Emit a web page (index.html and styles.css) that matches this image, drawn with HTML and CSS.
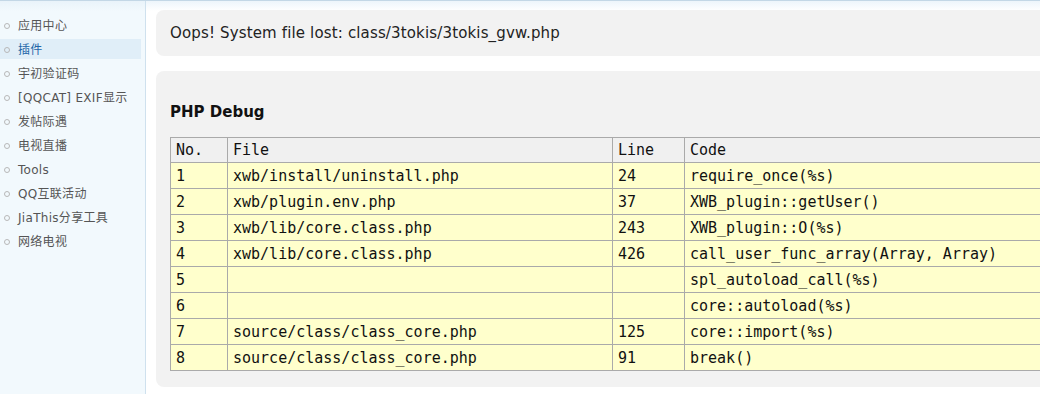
FILE: index.html
```html
<!DOCTYPE html>
<html>
<head>
<meta charset="utf-8">
<link rel="stylesheet" href="styles.css">
</head>
<body>
<div class="page">
  <aside class="sidebar">
    <ul class="menu">
      <li class="item">应用中心</li>
      <li class="item active">插件</li>
      <li class="item">宇初验证码</li>
      <li class="item">[QQCAT] EXIF显示</li>
      <li class="item">发帖际遇</li>
      <li class="item">电视直播</li>
      <li class="item">Tools</li>
      <li class="item">QQ互联活动</li>
      <li class="item">JiaThis分享工具</li>
      <li class="item">网络电视</li>
    </ul>
  </aside>
  <main class="main">
    <div class="box msg">Oops! System file lost: class/3tokis/3tokis_gvw.php</div>
    <div class="box debug">
      <h3 class="title">PHP Debug</h3>
      <div class="clip">
        <table class="trace">
          <colgroup><col class="c1"><col class="c2"><col class="c3"><col class="c4"></colgroup>
          <tr class="head"><td>No.</td><td>File</td><td>Line</td><td>Code</td></tr>
          <tr><td>1</td><td>xwb/install/uninstall.php</td><td>24</td><td>require_once(%s)</td></tr>
          <tr><td>2</td><td>xwb/plugin.env.php</td><td>37</td><td>XWB_plugin::getUser()</td></tr>
          <tr><td>3</td><td>xwb/lib/core.class.php</td><td>243</td><td>XWB_plugin::O(%s)</td></tr>
          <tr><td>4</td><td>xwb/lib/core.class.php</td><td>426</td><td>call_user_func_array(Array, Array)</td></tr>
          <tr><td>5</td><td></td><td></td><td>spl_autoload_call(%s)</td></tr>
          <tr><td>6</td><td></td><td></td><td>core::autoload(%s)</td></tr>
          <tr><td>7</td><td>source/class/class_core.php</td><td>125</td><td>core::import(%s)</td></tr>
          <tr><td>8</td><td>source/class/class_core.php</td><td>91</td><td>break()</td></tr>
        </table>
      </div>
    </div>
  </main>
</div>
</body>
</html>
```
FILE: styles.css
```css
html, body {
  margin: 0;
  padding: 0;
  background: #fff;
  overflow: hidden;
}
body {
  width: 1040px;
  height: 394px;
}
.page {
  display: flex;
  height: 394px;
  border-top: 1px solid #c3d7e6;
  box-sizing: border-box;
  background: linear-gradient(#edf5fb, #fff 10px);
  overflow: hidden;
}
.sidebar {
  flex: 0 0 145px;
  border-right: 1px solid #cfe1ee;
  background: linear-gradient(#e9f3fa, #f2f9fd 10px);
  font-family: "DejaVu Sans", "Noto Sans CJK SC", sans-serif;
  font-size: 12px;
  letter-spacing: 0.3px;
  color: #555;
}
.menu {
  list-style: none;
  margin: 0;
  padding: 14px 0 0 0;
}
.item {
  position: relative;
  height: 20px;
  line-height: 22px;
  margin-bottom: 4px;
  padding-left: 18px;
  margin-right: 4px;
  white-space: nowrap;
}
.item::before {
  content: "";
  position: absolute;
  left: 4px;
  top: 8px;
  width: 4px;
  height: 4px;
  border: 1px solid #b8b8b8;
  border-radius: 50%;
}
.item.active {
  background: #e0eef8;
  color: #2366a8;
}
.main {
  flex: 1 1 auto;
  min-width: 0;
  overflow: hidden;
  padding: 9px 0 0 10px;
}
.box {
  background: #f2f2f2;
  border-radius: 8px 0 0 8px;
}
.msg {
  height: 46px;
  line-height: 46px;
  padding-left: 14px;
  font-family: "DejaVu Sans", sans-serif;
  font-size: 15px;
  letter-spacing: 0.15px;
  color: #222;
  margin-bottom: 15px;
}
.debug {
  padding: 31px 0 16px 14px;
}
.title {
  margin: 0 0 15px 0;
  height: 20px;
  line-height: 20px;
  font-family: "DejaVu Sans", sans-serif;
  font-size: 15px;
  font-weight: bold;
  color: #111;
}
.clip {
  overflow: hidden;
}
.trace {
  border-collapse: collapse;
  width: 900px;
  font-family: "DejaVu Sans Mono", monospace;
  font-size: 15px;
  color: #111;
}
.c1 { width: 57px; }
.c2 { width: 385px; }
.c3 { width: 72px; }
.trace td {
  border: 1px solid #aaa;
  height: 25px;
  padding: 0 5px;
  background: #ffffcc;
  white-space: nowrap;
}
.trace .head td {
  background: #f0f0f0;
  height: 24px;
}
```
